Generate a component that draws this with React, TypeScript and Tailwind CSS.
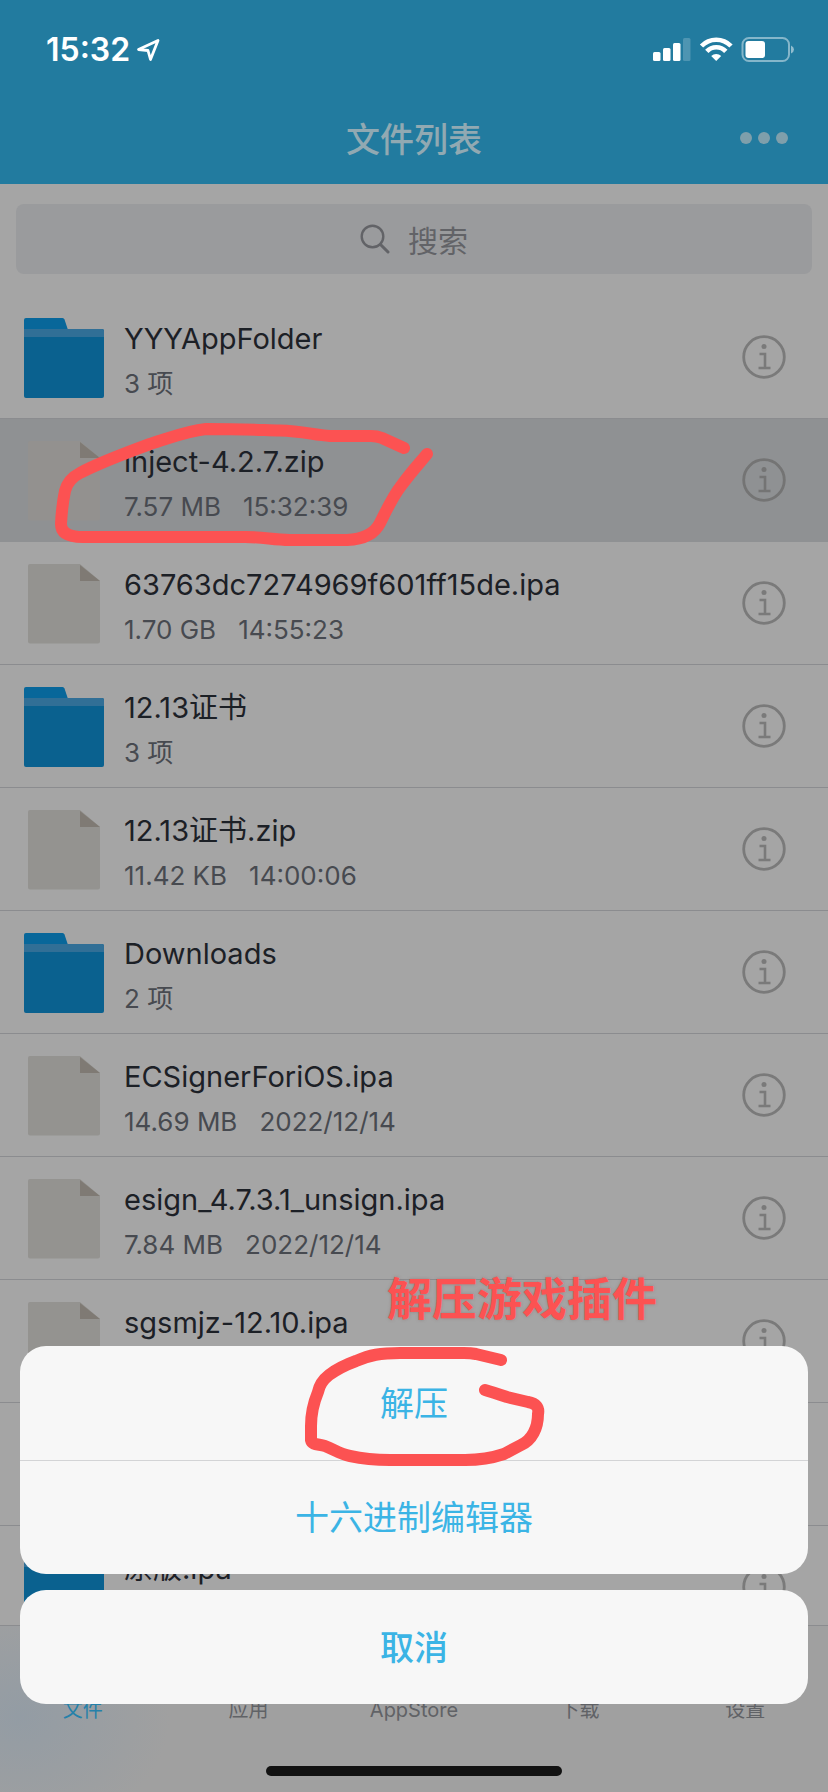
import React from "react";

type Kind = "folder" | "file";

interface Entry {
  kind: Kind;
  name?: string;
  meta?: string[];
  selected?: boolean;
}

const entries: Entry[] = [
  { kind: "folder", name: "YYYAppFolder", meta: ["3 项"] },
  { kind: "file", name: "inject-4.2.7.zip", meta: ["7.57 MB", "15:32:39"], selected: true },
  { kind: "file", name: "63763dc7274969f601ff15de.ipa", meta: ["1.70 GB", "14:55:23"] },
  { kind: "folder", name: "12.13证书", meta: ["3 项"] },
  { kind: "file", name: "12.13证书.zip", meta: ["11.42 KB", "14:00:06"] },
  { kind: "folder", name: "Downloads", meta: ["2 项"] },
  { kind: "file", name: "ECSignerForiOS.ipa", meta: ["14.69 MB", "2022/12/14"] },
  { kind: "file", name: "esign_4.7.3.1_unsign.ipa", meta: ["7.84 MB", "2022/12/14"] },
  { kind: "file", name: "sgsmjz-12.10.ipa" },
  { kind: "file" },
  { kind: "folder", name: "原版.ipa" },
];

const tabs = ["文件", "应用", "AppStore", "下载", "设置"];

function FolderIcon() {
  return (
    <svg viewBox="0 0 80 80" className="size-20 shrink-0" aria-hidden="true">
      <path d="M0 14V2a2 2 0 0 1 2-2h36.500q1.500 0 2 1.500L44 12v2z" fill="#08679a" />
      <path d="M0 11h78a2 2 0 0 1 2 2v65a2 2 0 0 1-2 2H2a2 2 0 0 1-2-2z" fill="#0a618f" />
      <path d="M0 11h78a2 2 0 0 1 2 2v6H0z" fill="#316f96" />
    </svg>
  );
}

function FileIcon({ dim }: { dim?: boolean }) {
  return (
    <svg viewBox="0 0 80 80" className="size-20 shrink-0" aria-hidden="true">
      <path d="M6 0h50l20 17v60.500a2 2 0 0 1-2 2H6a2 2 0 0 1-2-2V2a2 2 0 0 1 2-2z" fill={dim ? "#93918f" : "#949390"} />
      <path d="M56 1l20 16H56z" fill="#7f7a74" />
    </svg>
  );
}

function InfoIcon() {
  return (
    <svg viewBox="0 0 44 44" className="size-11" fill="none" stroke="currentColor" aria-hidden="true">
      <circle cx="22" cy="22" r="20.300" strokeWidth="2.800" />
      <circle cx="22" cy="11.500" r="2.500" fill="currentColor" stroke="none" />
      <path d="M17.500 19h5.500v14M16.500 33h12" strokeWidth="2.600" />
    </svg>
  );
}

function RowMark() {
  return (
    <svg viewBox="0 0 400 136" className="pointer-events-none absolute left-10 top-0 h-[136px] w-[400px] overflow-visible" fill="none" stroke="#fc5252" strokeWidth="12" strokeLinecap="round" strokeLinejoin="round" aria-hidden="true">
      <path d="M364 29L342 19Q337 17 331 17H290C274 16 262 12 240 11.500C220 11 205 10 166 10C146 12 130 19 110 25C80 36 55 46 40 54Q28 60 25 72Q22 86 21 105Q21 118 43 118H205C225 118 232 121 250 121H307Q332 120 340 104C347 90 353 77 361 67C372 52 378 46 387 35" />
    </svg>
  );
}

function SheetMark() {
  return (
    <svg viewBox="0 0 250 126" className="pointer-events-none absolute left-1/2 top-0 -ml-[114px] h-[126px] w-[250px] overflow-visible" fill="none" stroke="#fc5252" strokeWidth="12" strokeLinecap="round" strokeLinejoin="round" aria-hidden="true">
      <path d="M201 14L176 8Q171 7 164 7H100C80 7 70 9 56 15C45 19 37 23 29 29Q20 36 18 46C13 58 11 68 11 80V94C12 99 18 98 25 100C35 104 40 108 50 110Q68 114 90 114H165C185 114 195 111 204 108L221 99C232 94 238 82 238 68Q240 58 228 56L207 51C198 48 192 46 185 44" />
    </svg>
  );
}

function StatusBar() {
  return (
    <div className="flex h-[92px] items-start justify-between pl-[46px] pr-[34px] pt-[30px] text-white">
      <div className="flex h-10 items-center gap-1.5">
        <span className="text-[32px] font-semibold leading-10">15:32</span>
        <svg viewBox="0 0 24 24" className="size-6" fill="none" stroke="currentColor" strokeWidth="2.800" strokeLinejoin="round" aria-hidden="true">
          <path d="M2.500 11.500L22 2.500L14.500 21.500L12 12.500z" />
        </svg>
      </div>
      <svg viewBox="0 0 142 26" className="mt-[6px] h-[26px] w-[142px]" fill="currentColor" aria-hidden="true">
        <rect x="1" y="16" width="7.500" height="9" rx="1.500" />
        <rect x="11" y="12" width="7.500" height="13" rx="1.500" />
        <rect x="21" y="7" width="7.500" height="18" rx="1.500" />
        <rect x="31" y="2" width="7.500" height="23" rx="1.500" opacity="0.200" />
        <g fill="none" stroke="currentColor" strokeWidth="4.600">
          <path d="M49.500 10a20.500 20.500 0 0 1 29.500 0" />
          <path d="M54.800 15.400a13 13 0 0 1 19 0" />
        </g>
        <path d="M64.200 25l-5-5a7.300 7.300 0 0 1 10 0z" />
        <rect x="90.500" y="2" width="46.500" height="23" rx="6.500" fill="none" stroke="currentColor" strokeWidth="2" opacity="0.450" />
        <path d="M139 9.500q3 1.500 3 4t-3 4z" opacity="0.500" />
        <rect x="93.500" y="5" width="19.500" height="17" rx="3" />
      </svg>
    </div>
  );
}

function Row({ entry }: { entry: Entry }) {
  return (
    <li
      className={
        entry.selected
          ? "relative flex h-[123px] shrink-0 items-start border-b border-[#8f9193] bg-[#8f9193] px-6 pt-[22px]"
          : "flex h-[123px] shrink-0 items-start border-b border-[#8b8c8f] px-6 pt-[22px]"
      }
    >
      {entry.kind === "folder" ? <FolderIcon /> : <FileIcon dim={entry.selected} />}
      <div className="ml-5 flex min-w-0 flex-1 flex-col gap-[6px]">
        <span className="truncate text-[29px] leading-[42px] text-[#1c2026]">{entry.name}</span>
        <span className="flex gap-[22px] text-[26px] leading-9 text-[#474a50]">
          {entry.meta?.map((m) => <span key={m}>{m}</span>)}
        </span>
      </div>
      <button type="button" aria-label="Info" className={entry.selected ? "mr-[18px] mt-[17px] text-[#747474]" : "mr-[18px] mt-[17px] text-[#7a7a7a]"}>
        <InfoIcon />
      </button>
      {entry.selected && <RowMark />}
    </li>
  );
}

export default function App() {
  return (
    <div className="relative flex h-screen flex-col overflow-hidden bg-[#a5a5a5] font-['Inter','Noto_Sans_CJK_SC',sans-serif]">
      <header className="shrink-0 bg-[#227b9f]">
        <StatusBar />
        <div className="grid h-[92px] grid-cols-[1fr_auto_1fr] items-center px-10">
          <h1 className="col-start-2 pt-1 text-[34px] font-medium leading-10 text-[#91a9b2]">文件列表</h1>
          <button type="button" aria-label="More" className="flex gap-[6px] justify-self-end">
            <span className="size-3 rounded-full bg-[#7f9fab]" />
            <span className="size-3 rounded-full bg-[#7f9fab]" />
            <span className="size-3 rounded-full bg-[#7f9fab]" />
          </button>
        </div>
      </header>

      <main className="flex min-h-0 flex-1 flex-col overflow-hidden">
        <button type="button" className="mx-4 mb-[22px] mt-5 flex h-[70px] shrink-0 items-center justify-center gap-[18px] rounded-lg bg-[#9a9b9d] text-[30px] leading-10 text-[#626367]">
          <svg viewBox="0 0 30 30" className="size-[30px]" fill="none" stroke="currentColor" strokeWidth="2.400" strokeLinecap="round" aria-hidden="true">
            <circle cx="12.500" cy="12.500" r="10.800" />
            <path d="M20.500 20.500L28 28" strokeWidth="3" />
          </svg>
          <span className="pt-[3px]">搜索</span>
        </button>
        <ul className="flex flex-col">
          {entries.map((entry, i) => (
            <Row key={i} entry={entry} />
          ))}
        </ul>
      </main>

      <nav className="flex h-[167px] shrink-0 flex-col justify-between border-t border-[#8b8c8f] bg-[#a0a0a0] bg-[radial-gradient(ellipse_150px_120px_at_20px_90px,#939ca4,transparent)] pb-4 pt-[68px]">
        <div className="grid grid-cols-5">
          {tabs.map((t, i) => (
            <a key={t} href="#" className={i === 0 ? "text-center text-[20px] leading-8 text-[#2581aa]" : "text-center text-[20px] leading-8 text-[#606266]"}>
              {t}
            </a>
          ))}
        </div>
        <div className="h-[10px] w-[296px] self-center rounded-full bg-[#121212]" />
      </nav>

      <div role="dialog" aria-label="文件" className="absolute inset-x-5 bottom-[88px] flex flex-col gap-4 text-[34px] text-[#3bb4e5]">
        <div className="relative flex flex-col">
          <div className="flex flex-col overflow-hidden rounded-[26px] bg-[#f7f7f7]">
            <button type="button" className="h-[115px] w-full border-b border-[#d3d4d6]">解压</button>
            <button type="button" className="h-[113px] w-full">十六进制编辑器</button>
          </div>
          <p className="absolute -top-[76px] left-1/2 -ml-[27px] whitespace-nowrap text-[45px] font-bold leading-[60px] text-[#fc5252] [text-shadow:0_0_3px_#80606080]">解压游戏插件</p>
          <SheetMark />
        </div>
        <button type="button" className="h-[114px] w-full rounded-[26px] bg-[#f7f7f7] font-medium">取消</button>
      </div>
    </div>
  );
}
